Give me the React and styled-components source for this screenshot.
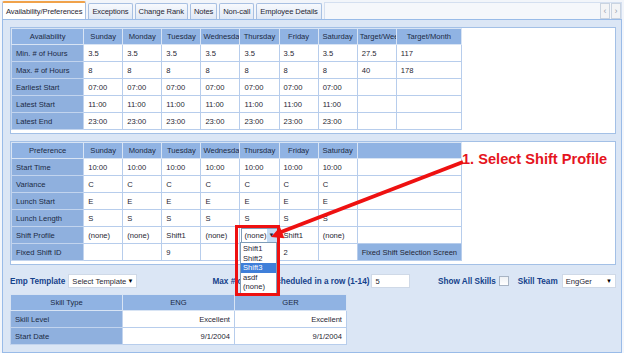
import styled, { createGlobalStyle } from "styled-components";

const GlobalStyle = createGlobalStyle`
  body {
    margin: 0;
    font-family: "Liberation Sans", Arial, sans-serif;
  }
`;

const Root = styled.div`
  position: relative;
  width: 624px;
  height: 353px;
  overflow: hidden;
  background: #f3f6fb;
  font-size: 7.6px;
  color: #1f2633;
  display: flex;
  flex-direction: column;
`;

const TabStrip = styled.div`
  display: flex;
  align-items: flex-end;
  gap: 2px;
  height: 19px;
  padding: 0 2px;
  background: #f2f5fa;
`;

const Tab = styled.div`
  height: ${(p) => (p.$active ? "16px" : "15px")};
  padding: 0 3px;
  display: flex;
  align-items: center;
  white-space: nowrap;
  letter-spacing: -0.1px;
  border: 1px solid #a8c0e2;
  border-bottom: none;
  border-top: ${(p) => (p.$active ? "2px solid #f0a24a" : "1px solid #a8c0e2")};
  border-radius: 2px 2px 0 0;
  background: ${(p) =>
    p.$active ? "#ffffff" : "linear-gradient(#f7f9fd, #dfe8f5)"};
  color: #1f2633;
`;

const TabSpacer = styled.div`
  flex: 1;
  align-self: stretch;
  margin-top: 2px;
  border: 1px solid #d4dff0;
  border-bottom: none;
  background: #f5f7fb;
  display: flex;
  justify-content: flex-end;
  align-items: center;
  gap: 1px;
`;

const ScrollBtn = styled.div`
  width: 8px;
  height: 14px;
  border: 1px solid #c9d3e0;
  background: #f3f4f6;
  color: #9aa3b0;
  font-size: 9px;
  display: flex;
  align-items: center;
  justify-content: center;
`;

const Panel = styled.div`
  flex: 1;
  margin: 0 2px;
  border: 1px solid #99bbe8;
  background: #dbe6f5;
  padding: 7px 5px 0 7px;
  display: flex;
  flex-direction: column;
`;

const Box = styled.div`
  background: #ffffff;
  border: 1px solid #a3c0e6;
  padding: 0 0 3px 0;
  margin-bottom: ${(p) => p.$gap || 0}px;
`;

const Grid = styled.table`
  border-collapse: collapse;
  table-layout: fixed;
  width: ${(p) => p.$width}px;
`;

const Th = styled.th`
  height: 15px;
  padding: 0 2px;
  background: #90b3e3;
  border: 1px solid #d8e4f4;
  font-weight: normal;
  text-align: center;
  white-space: nowrap;
  overflow: hidden;
  color: #1b2a44;
`;

const Label = styled.td`
  height: 16px;
  padding: 0 4px;
  background: #8fb0de;
  border: 1px solid #c2d4ee;
  white-space: nowrap;
  overflow: hidden;
  color: #1b2a44;
`;

const Td = styled.td`
  height: 16px;
  padding: 0 4px;
  background: ${(p) => (p.$button ? "#8fb2e1" : "#ffffff")};
  border: 1px solid #b7cdec;
  text-align: ${(p) => (p.$button ? "center" : p.$right ? "right" : "left")};
  white-space: nowrap;
  overflow: hidden;
`;

const CellSelect = styled.div`
  display: flex;
  align-items: center;
  height: 13px;
  margin-left: -3px;
  margin-right: -3px;
  border: 1px solid #7f9db9;
  background: #fff;
`;

const CellSelectText = styled.span`
  flex: 1;
  padding-left: 2px;
`;

const CellArrow = styled.span`
  width: 10px;
  align-self: stretch;
  background: #c4dcf6;
  display: flex;
  align-items: center;
  justify-content: center;
  font-size: 6px;
`;

const Controls = styled.div`
  display: flex;
  align-items: center;
  height: 16px;
  margin-top: 8px;
`;

const FieldLabel = styled.span`
  font-weight: bold;
  font-size: 8.2px;
  color: #15428b;
  white-space: nowrap;
  margin-left: ${(p) => p.$ml || 0}px;
`;

const Select = styled.div`
  width: ${(p) => p.$w}px;
  height: 14px;
  margin-left: ${(p) => p.$ml || 0}px;
  box-sizing: border-box;
  border: 1px solid #cfd9e7;
  background: #fff;
  display: flex;
  align-items: center;
  justify-content: space-between;
  padding: 0 3px;
  white-space: nowrap;
`;

const Caret = styled.span`
  font-size: 6px;
  color: #000;
`;

const Input = styled.div`
  width: 39px;
  height: 14px;
  margin-left: 2px;
  box-sizing: border-box;
  border: 1px solid #cfd9e7;
  background: #fff;
  padding-left: 3px;
  display: flex;
  align-items: center;
`;

const Check = styled.span`
  width: 8px;
  height: 8px;
  margin-left: 3px;
  border: 1px solid #a8b4c4;
  background: linear-gradient(#eef1f5, #ffffff);
`;

const SkillGrid = styled(Grid)`
  margin-top: 5px;
`;

const Overlay = styled.svg`
  position: absolute;
  left: 0;
  top: 0;
  pointer-events: none;
`;

const Callout = styled.div`
  position: absolute;
  left: 462px;
  top: 151px;
  font-size: 14.6px;
  font-weight: bold;
  color: #e5141e;
  white-space: nowrap;
`;

const DropList = styled.div`
  position: absolute;
  left: 240px;
  top: 242px;
  width: 35px;
  background: #fff;
  border: 1px solid #7f9db9;
  padding: 1px 0;
`;

const DropItem = styled.div`
  height: 9.6px;
  line-height: 9.6px;
  padding-left: 2px;
  background: ${(p) => (p.$selected ? "#3f7fd9" : "transparent")};
  color: ${(p) => (p.$selected ? "#fff" : "#1f2633")};
`;

const RedFrame = styled.div`
  position: absolute;
  left: 235px;
  top: 225px;
  width: 45px;
  height: 71px;
  box-sizing: border-box;
  border: 3px solid #ee1111;
`;

const days = ["Sunday", "Monday", "Tuesday", "Wednesday", "Thursday", "Friday", "Saturday"];

const availability = [
  ["Min. # of Hours", ["3.5", "3.5", "3.5", "3.5", "3.5", "3.5", "3.5"], "27.5", "117"],
  ["Max. # of Hours", ["8", "8", "8", "8", "8", "8", "8"], "40", "178"],
  ["Earliest Start", ["07:00", "07:00", "07:00", "07:00", "07:00", "07:00", "07:00"], "", ""],
  ["Latest Start", ["11:00", "11:00", "11:00", "11:00", "11:00", "11:00", "11:00"], "", ""],
  ["Latest End", ["23:00", "23:00", "23:00", "23:00", "23:00", "23:00", "23:00"], "", ""],
];

const preferences = [
  ["Start Time", ["10:00", "10:00", "10:00", "10:00", "10:00", "10:00", "10:00"]],
  ["Variance", ["C", "C", "C", "C", "C", "C", "C"]],
  ["Lunch Start", ["E", "E", "E", "E", "E", "E", "E"]],
  ["Lunch Length", ["S", "S", "S", "S", "S", "S", "S"]],
  ["Shift Profile", ["(none)", "(none)", "Shift1", "(none)", "select", "Shift1", "(none)"]],
];

const Cols = () => (
  <colgroup>
    <col style={{ width: 72 }} />
    {days.map((d) => (
      <col key={d} style={{ width: 39 }} />
    ))}
    <col style={{ width: 39 }} />
    <col style={{ width: 65 }} />
  </colgroup>
);

export default function App() {
  return (
    <Root>
      <GlobalStyle />
      <TabStrip>
        <Tab $active>Availability/Preferences</Tab>
        <Tab>Exceptions</Tab>
        <Tab>Change Rank</Tab>
        <Tab>Notes</Tab>
        <Tab>Non-call</Tab>
        <Tab>Employee Details</Tab>
        <TabSpacer>
          <ScrollBtn>‹</ScrollBtn>
          <ScrollBtn>›</ScrollBtn>
        </TabSpacer>
      </TabStrip>

      <Panel>
        <Box $gap={7}>
          <Grid $width={451}>
            <Cols />
            <thead>
              <tr>
                <Th>Availability</Th>
                {days.map((d) => (
                  <Th key={d}>{d}</Th>
                ))}
                <Th>Target/Week</Th>
                <Th>Target/Month</Th>
              </tr>
            </thead>
            <tbody>
              {availability.map(([label, vals, week, month]) => (
                <tr key={label}>
                  <Label>{label}</Label>
                  {vals.map((v, i) => (
                    <Td key={i}>{v}</Td>
                  ))}
                  <Td>{week}</Td>
                  <Td>{month}</Td>
                </tr>
              ))}
            </tbody>
          </Grid>
        </Box>

        <Box>
          <Grid $width={451}>
            <Cols />
            <thead>
              <tr>
                <Th>Preference</Th>
                {days.map((d) => (
                  <Th key={d}>{d}</Th>
                ))}
                <Th colSpan={2} />
              </tr>
            </thead>
            <tbody>
              {preferences.map(([label, vals]) => (
                <tr key={label}>
                  <Label>{label}</Label>
                  {vals.map((v, i) =>
                    v === "select" ? (
                      <Td key={i}>
                        <CellSelect>
                          <CellSelectText>(none)</CellSelectText>
                          <CellArrow>▼</CellArrow>
                        </CellSelect>
                      </Td>
                    ) : (
                      <Td key={i}>{v}</Td>
                    )
                  )}
                  <Td colSpan={2} />
                </tr>
              ))}
              <tr>
                <Label>Fixed Shift ID</Label>
                <Td />
                <Td />
                <Td>9</Td>
                <Td />
                <Td />
                <Td>2</Td>
                <Td />
                <Td colSpan={2} $button>
                  Fixed Shift Selection Screen
                </Td>
              </tr>
            </tbody>
          </Grid>
        </Box>

        <Controls>
          <FieldLabel>Emp Template</FieldLabel>
          <Select $w={70} $ml={3}>
            Select Template <Caret>▼</Caret>
          </Select>
          <FieldLabel $ml={75}>Max # of shifts scheduled in a row (1-14)</FieldLabel>
          <Input>5</Input>
          <FieldLabel $ml={28}>Show All Skills</FieldLabel>
          <Check />
          <FieldLabel $ml={9}>Skill Team</FieldLabel>
          <Select $w={55} $ml={4}>
            EngGer <Caret>▼</Caret>
          </Select>
        </Controls>

        <SkillGrid $width={336}>
          <colgroup>
            <col style={{ width: 112 }} />
            <col style={{ width: 112 }} />
            <col style={{ width: 112 }} />
          </colgroup>
          <thead>
            <tr>
              <Th>Skill Type</Th>
              <Th>ENG</Th>
              <Th>GER</Th>
            </tr>
          </thead>
          <tbody>
            <tr>
              <Label>Skill Level</Label>
              <Td $right>Excellent</Td>
              <Td $right>Excellent</Td>
            </tr>
            <tr>
              <Label>Start Date</Label>
              <Td $right>9/1/2004</Td>
              <Td $right>9/1/2004</Td>
            </tr>
          </tbody>
        </SkillGrid>
      </Panel>

      <DropList>
        <DropItem>Shift1</DropItem>
        <DropItem>Shift2</DropItem>
        <DropItem $selected>Shift3</DropItem>
        <DropItem>asdf</DropItem>
        <DropItem>(none)</DropItem>
      </DropList>
      <RedFrame />
      <Overlay width="624" height="353" viewBox="0 0 624 353">
        <line x1="463" y1="162" x2="281" y2="232" stroke="#ee1111" strokeWidth="4" />
        <polygon points="271,237 284.4,238.2 280,227" fill="#ee1111" />
      </Overlay>
      <Callout>1. Select Shift Profile</Callout>
    </Root>
  );
}
